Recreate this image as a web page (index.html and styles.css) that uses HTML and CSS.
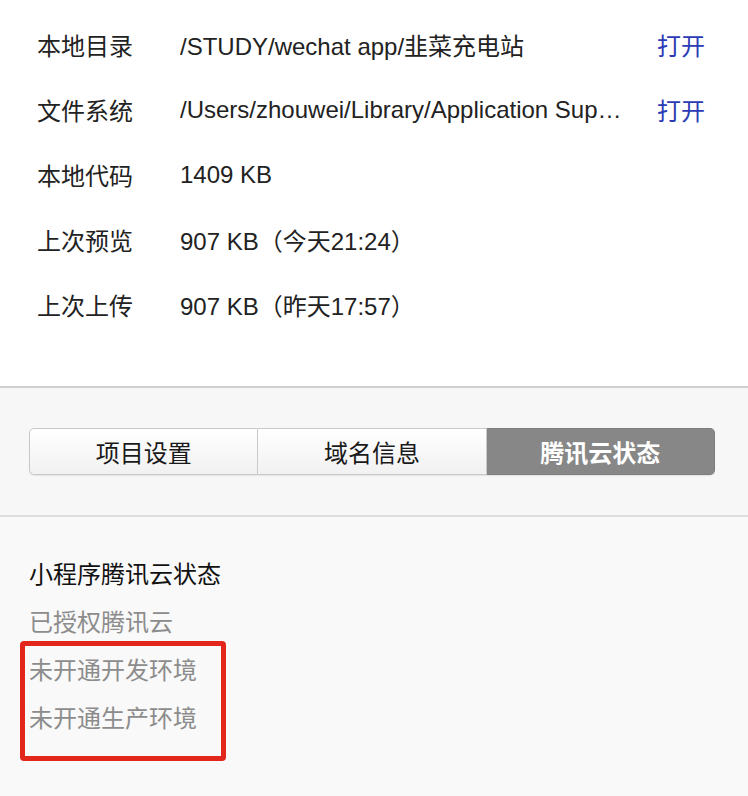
FILE: index.html
```html
<!DOCTYPE html>
<html lang="zh-CN">
<head>
<meta charset="utf-8">
<title>项目信息</title>
<link rel="stylesheet" href="styles.css">
</head>
<body>
<section class="info">
  <div class="row"><span class="label">本地目录</span><span class="value">/STUDY/wechat app/韭菜充电站</span><a class="link">打开</a></div>
  <div class="row"><span class="label">文件系统</span><span class="value">/Users/zhouwei/Library/Application Sup…</span><a class="link">打开</a></div>
  <div class="row"><span class="label">本地代码</span><span class="value">1409 KB</span></div>
  <div class="row"><span class="label">上次预览</span><span class="value">907 KB（今天21:24）</span></div>
  <div class="row"><span class="label">上次上传</span><span class="value">907 KB（昨天17:57）</span></div>
</section>
<section class="tabs-bar">
  <div class="segmented">
    <div class="seg">项目设置</div>
    <div class="seg">域名信息</div>
    <div class="seg active">腾讯云状态</div>
  </div>
</section>
<section class="status">
  <div class="status-list">
    <div class="status-title">小程序腾讯云状态</div>
    <div class="status-item">已授权腾讯云</div>
    <div class="status-item">未开通开发环境</div>
    <div class="status-item">未开通生产环境</div>
    <div class="highlight"></div>
  </div>
</section>
</body>
</html>
```
FILE: styles.css
```css
html, body {
  margin: 0;
  padding: 0;
}
body {
  width: 748px;
  height: 796px;
  overflow: hidden;
  background: #f9f9f9;
  font-family: "Liberation Sans", "Noto Sans CJK SC", sans-serif;
  font-size: 24px;
  color: #222;
}
.info {
  background: #fff;
  padding: 12px 0 49px 0;
  border-bottom: 2px solid #cfcfcf;
}
.row {
  display: flex;
  align-items: center;
  height: 65px;
}
.label {
  width: 143px;
  padding-left: 37px;
  flex: none;
}
.value {
  width: 477px;
  flex: none;
  white-space: nowrap;
  overflow: hidden;
}
.link {
  color: #2a3bb5;
  cursor: pointer;
}
.tabs-bar {
  background: #f7f7f7;
  padding: 40px 33px 40px 29px;
  border-bottom: 2px solid #dedede;
}
.segmented {
  display: flex;
  height: 47px;
  border-radius: 5px;
  box-shadow: 0 1px 1px rgba(0,0,0,0.08);
}
.seg {
  flex: 1;
  display: flex;
  align-items: center;
  justify-content: center;
  background: linear-gradient(#ffffff, #f1f1f1);
  border: 1px solid #c9c9c9;
  border-left: none;
  color: #1a1a1a;
}
.seg:first-child {
  border-left: 1px solid #c9c9c9;
  border-radius: 5px 0 0 5px;
}
.seg.active {
  background: #878787;
  border-color: #7e7e7e;
  color: #fff;
  font-weight: bold;
  border-radius: 0 5px 5px 0;
}
.status {
  padding: 34px 0 0 29px;
}
.status-list {
  position: relative;
}
.status-title,
.status-item {
  line-height: 48px;
  height: 48px;
}
.status-title {
  color: #111;
}
.status-item {
  color: #8c8c8c;
}
.highlight {
  position: absolute;
  left: -9px;
  top: 90px;
  width: 196px;
  height: 110px;
  border: 5px solid #e3261c;
  border-radius: 4px;
}
```
